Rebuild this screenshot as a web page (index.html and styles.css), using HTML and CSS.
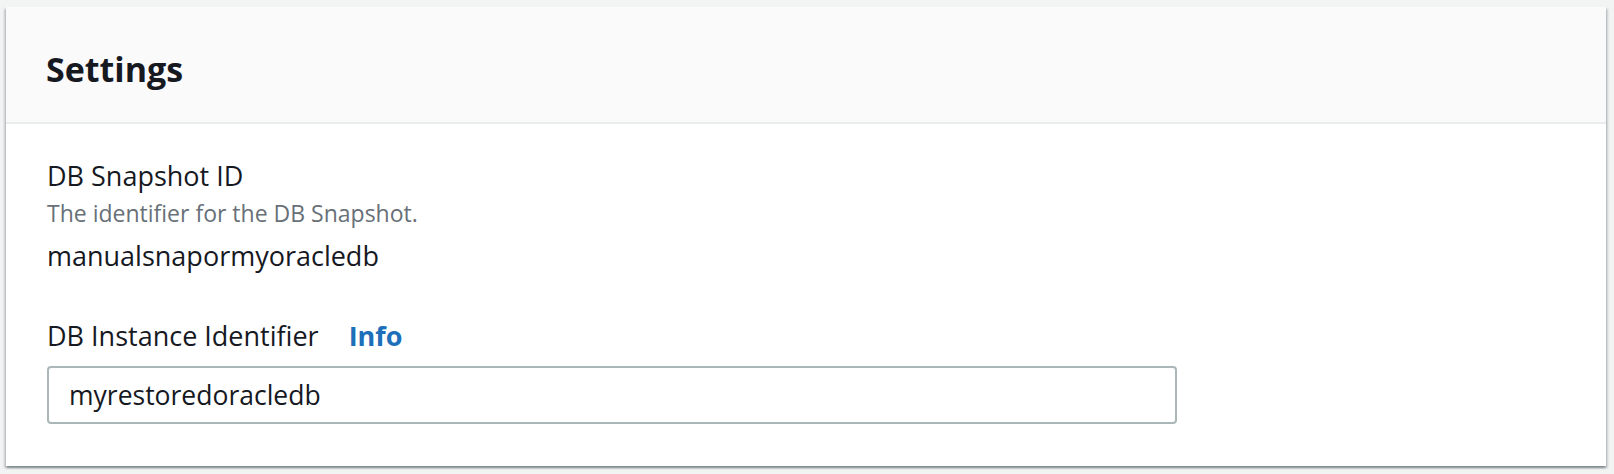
FILE: index.html
```html
<!DOCTYPE html>
<html>
<head>
<meta charset="utf-8">
<link rel="stylesheet" href="styles.css">
</head>
<body>
<div class="card">
  <div class="card-header">
    <h2 class="title">Settings</h2>
  </div>
  <div class="card-body">
    <div class="field">
      <div class="label">DB Snapshot ID</div>
      <div class="desc">The identifier for the DB Snapshot.</div>
      <div class="value">manualsnapormyoracledb</div>
    </div>
    <div class="field field-2">
      <div class="label-row">
        <span class="label">DB Instance Identifier</span>
        <a class="info">Info</a>
      </div>
      <div class="input">myrestoredoracledb</div>
    </div>
  </div>
</div>
</body>
</html>
```

FILE: styles.css
```css
html, body {
  margin: 0;
  padding: 0;
}
body {
  background: #f2f3f3;
  padding: 7px 8px 8px 6px;
  font-family: "Open Sans", "Liberation Sans", sans-serif;
  color: #16191f;
}
.card {
  width: 1600px;
  height: 459px;
  box-sizing: border-box;
  background: #ffffff;
  box-shadow: 0 2px 2px 0 rgba(0, 28, 36, 0.3), 2px 2px 2px 0 rgba(0, 28, 36, 0.15), -2px 2px 2px 0 rgba(0, 28, 36, 0.15);
  display: flex;
  flex-direction: column;
}
.card-header {
  background: #fafafa;
  height: 117px;
  box-sizing: border-box;
  border-bottom: 2px solid #eaeded;
  padding: 8px 40px 0;
  display: flex;
  align-items: center;
}
.title {
  margin: 0;
  font-size: 34px;
  font-weight: 700;
  line-height: 44px;
  color: #16191f;
}
.card-body {
  padding: 32px 40px 0 41px;
  display: flex;
  flex-direction: column;
}
.label {
  font-size: 27px;
  line-height: 40px;
}
.desc {
  font-size: 23px;
  line-height: 34px;
  color: #687078;
}
.value {
  font-size: 27px;
  line-height: 40px;
  margin-top: 6px;
}
.field-2 {
  margin-top: 40px;
}
.label-row {
  display: flex;
  align-items: baseline;
  gap: 30px;
}
.info {
  font-size: 27px;
  font-weight: 700;
  color: #1d6fba;
  line-height: 40px;
}
.input {
  margin-top: 10px;
  width: 1130px;
  height: 58px;
  box-sizing: border-box;
  border: 2px solid #aab7b8;
  border-radius: 4px;
  padding: 0 20px;
  display: flex;
  align-items: center;
  font-size: 26.5px;
}
```
